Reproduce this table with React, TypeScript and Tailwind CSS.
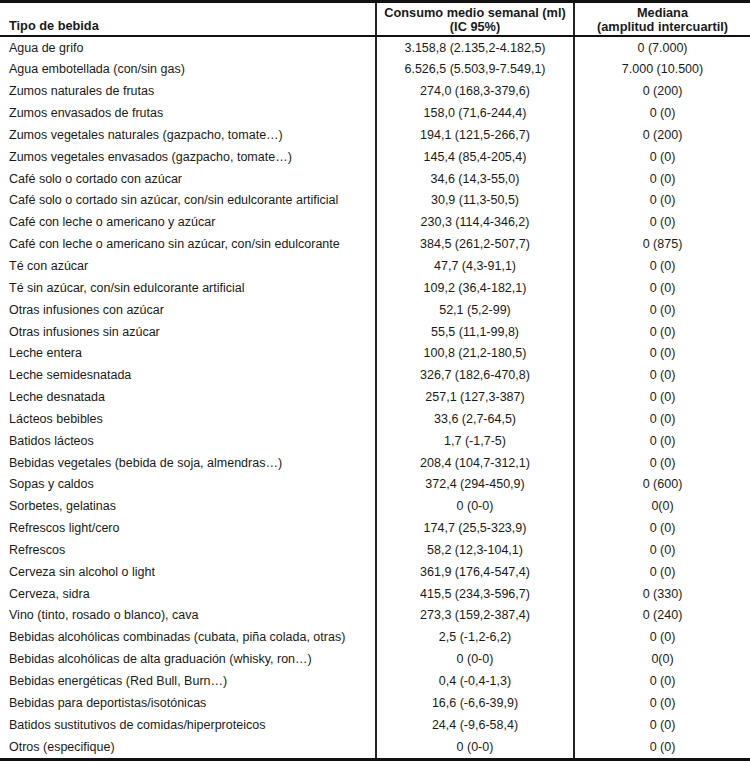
import React from "react";

type Row = [string, string, string];

const rows: Row[] = [
  ["Agua de grifo", "3.158,8 (2.135,2-4.182,5)", "0 (7.000)"],
  ["Agua embotellada (con/sin gas)", "6.526,5 (5.503,9-7.549,1)", "7.000 (10.500)"],
  ["Zumos naturales de frutas", "274,0 (168,3-379,6)", "0 (200)"],
  ["Zumos envasados de frutas", "158,0 (71,6-244,4)", "0 (0)"],
  ["Zumos vegetales naturales (gazpacho, tomate…)", "194,1 (121,5-266,7)", "0 (200)"],
  ["Zumos vegetales envasados (gazpacho, tomate…)", "145,4 (85,4-205,4)", "0 (0)"],
  ["Café solo o cortado con azúcar", "34,6 (14,3-55,0)", "0 (0)"],
  ["Café solo o cortado sin azúcar, con/sin edulcorante artificial", "30,9 (11,3-50,5)", "0 (0)"],
  ["Café con leche o americano y azúcar", "230,3 (114,4-346,2)", "0 (0)"],
  ["Café con leche o americano sin azúcar, con/sin edulcorante", "384,5 (261,2-507,7)", "0 (875)"],
  ["Té con azúcar", "47,7 (4,3-91,1)", "0 (0)"],
  ["Té sin azúcar, con/sin edulcorante artificial", "109,2 (36,4-182,1)", "0 (0)"],
  ["Otras infusiones con azúcar", "52,1 (5,2-99)", "0 (0)"],
  ["Otras infusiones sin azúcar", "55,5 (11,1-99,8)", "0 (0)"],
  ["Leche entera", "100,8 (21,2-180,5)", "0 (0)"],
  ["Leche semidesnatada", "326,7 (182,6-470,8)", "0 (0)"],
  ["Leche desnatada", "257,1 (127,3-387)", "0 (0)"],
  ["Lácteos bebibles", "33,6 (2,7-64,5)", "0 (0)"],
  ["Batidos lácteos", "1,7 (-1,7-5)", "0 (0)"],
  ["Bebidas vegetales (bebida de soja, almendras…)", "208,4 (104,7-312,1)", "0 (0)"],
  ["Sopas y caldos", "372,4 (294-450,9)", "0 (600)"],
  ["Sorbetes, gelatinas", "0 (0-0)", "0(0)"],
  ["Refrescos light/cero", "174,7 (25,5-323,9)", "0 (0)"],
  ["Refrescos", "58,2 (12,3-104,1)", "0 (0)"],
  ["Cerveza sin alcohol o light", "361,9 (176,4-547,4)", "0 (0)"],
  ["Cerveza, sidra", "415,5 (234,3-596,7)", "0 (330)"],
  ["Vino (tinto, rosado o blanco), cava", "273,3 (159,2-387,4)", "0 (240)"],
  ["Bebidas alcohólicas combinadas (cubata, piña colada, otras)", "2,5 (-1,2-6,2)", "0 (0)"],
  ["Bebidas alcohólicas de alta graduación (whisky, ron…)", "0 (0-0)", "0(0)"],
  ["Bebidas energéticas (Red Bull, Burn…)", "0,4 (-0,4-1,3)", "0 (0)"],
  ["Bebidas para deportistas/isotónicas", "16,6 (-6,6-39,9)", "0 (0)"],
  ["Batidos sustitutivos de comidas/hiperproteicos", "24,4 (-9,6-58,4)", "0 (0)"],
  ["Otros (especifique)", "0 (0-0)", "0 (0)"],
];

const App: React.FC = () => {
  return (
    <div className="w-[750px] h-[763px] bg-white text-[#1a1a1a] font-['Liberation_Sans',Arial,sans-serif] text-[12.5px]">
      {/* HEADER */}
      <div className="grid grid-cols-[375px_198px_177px] border-t-[3px] border-b-2 border-[#111] h-[37px] font-bold text-[12.75px] leading-[14px]">
        <div className="flex items-end pl-[9px] pb-[2px]">Tipo de bebida</div>
        <div className="flex flex-col items-center justify-center border-l-2 border-[#222] pt-[1px]">
          <span>Consumo medio semanal (ml)</span>
          <span>(IC 95%)</span>
        </div>
        <div className="flex flex-col items-center justify-center border-l-2 border-[#222] pt-[1px]">
          <span>Mediana</span>
          <span>(amplitud intercuartil)</span>
        </div>
      </div>
      {/* BODY */}
      <div className="border-b-[3px] border-[#111]">
        {rows.map(([name, mean, median]) => (
          <div key={name} className="grid grid-cols-[375px_198px_177px] h-[21.85px]">
            <div className="flex items-center pl-[9px] whitespace-nowrap">{name}</div>
            <div className="flex items-center justify-center border-l-2 border-[#222]">{mean}</div>
            <div className="flex items-center justify-center border-l-2 border-[#222]">{median}</div>
          </div>
        ))}
      </div>
    </div>
  );
};

export default App;
